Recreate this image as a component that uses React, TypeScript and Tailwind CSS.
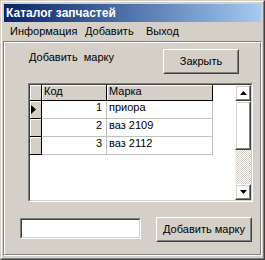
const raised =
  "border border-t-white border-l-white border-r-[#404040] border-b-[#404040]";
const raisedInner =
  "border border-t-[#d4d0c8] border-l-[#d4d0c8] border-r-[#808080] border-b-[#808080]";

function Button({ label, className }: { label: string; className: string }) {
  return (
    <div className={`${raised} ${className}`}>
      <div className={`${raisedInner} flex h-full w-full items-center justify-center`}>
        {label}
      </div>
    </div>
  );
}

function ScrollButton({ dir }: { dir: "up" | "down" }) {
  return (
    <div className={`${raised} h-[16px] w-[16px]`}>
      <div className={`${raisedInner} flex h-full w-full items-center justify-center`}>
        <svg width="7" height="4" viewBox="0 0 7 4">
          {dir === "up" ? (
            <polygon points="3.5,0 7,4 0,4" fill="#000" />
          ) : (
            <polygon points="0,0 7,0 3.5,4" fill="#000" />
          )}
        </svg>
      </div>
    </div>
  );
}

const rows = [
  { code: 1, name: "приора" },
  { code: 2, name: "ваз 2109" },
  { code: 3, name: "ваз 2112" },
];

function Grid() {
  return (
    <div className="ml-[23px] mt-[9px] h-[119px] w-[225px] border border-t-[#808080] border-l-[#808080] border-r-white border-b-white">
      <div className="flex h-full w-full border border-t-[#404040] border-l-[#404040] border-r-[#d4d0c8] border-b-[#d4d0c8] bg-white">
        <div className="flex w-[205px] flex-col">
          {/* header */}
          <div className="flex h-[16px]">
            <div className="h-full w-[12px] border-r border-b border-r-black border-b-black bg-[#d4d0c8] shadow-[inset_1px_1px_0_#fff]" />
            <div className="h-full w-[65px] border-r border-b border-r-black border-b-black bg-[#d4d0c8] pl-[2px] leading-[13px] shadow-[inset_1px_1px_0_#fff]">
              Код
            </div>
            <div className="h-full w-[106px] border-r border-b border-r-black border-b-black bg-[#d4d0c8] pl-[2px] leading-[13px] shadow-[inset_1px_1px_0_#fff]">
              Марка
            </div>
          </div>
          {rows.map((r, i) => (
            <div key={r.code} className="flex h-[18px]">
              <div className="flex h-full w-[12px] items-center border-r border-b border-r-black border-b-black bg-[#d4d0c8] pl-[1px] shadow-[inset_1px_1px_0_#fff]">
                {i === 0 && (
                  <svg width="5" height="9" viewBox="0 0 5 9">
                    <polygon points="0,0 5,4.5 0,9" fill="#000" />
                  </svg>
                )}
              </div>
              <div className="h-full w-[65px] border-r border-b border-[#c0c0c0] pr-[4px] text-right leading-[13px]">
                {r.code}
              </div>
              <div className="h-full w-[106px] border-r border-b border-[#c0c0c0] pl-[2px] leading-[13px]">
                {r.name}
              </div>
            </div>
          ))}
        </div>
        {/* scrollbar */}
        <div className="flex w-[16px] flex-col">
          <ScrollButton dir="up" />
          <div className={`${raised} h-[49px] w-[16px]`}>
            <div className={`${raisedInner} h-full w-full`} />
          </div>
          <div className="flex-1 bg-[repeating-conic-gradient(#d4d0c8_0%_25%,#ffffff_0%_50%)] bg-[length:2px_2px]" />
          <ScrollButton dir="down" />
        </div>
      </div>
    </div>
  );
}

export default function App() {
  return (
    <div className="h-[260px] w-[265px] font-['Liberation_Sans',Arial,sans-serif] text-[11px] text-black">
      <div className="h-full w-full border border-t-[#d4d0c8] border-l-[#d4d0c8] border-r-[#404040] border-b-[#404040]">
        <div className="flex h-full w-full flex-col border border-t-white border-l-white border-r-[#808080] border-b-[#808080] bg-[#d4d0c8] px-[1px] pt-[2px]">
          {/* title bar */}
          <div className="mx-[1px] flex h-[18px] items-center bg-gradient-to-r from-[#0a246a] to-[#a6caf0] pl-[2px] text-[12px] font-bold text-white">
            Каталог запчастей
          </div>
          {/* menu */}
          <div className="mx-[1px] flex h-[19px] items-center">
            <span className="w-[75px] pl-[6px]">Информация</span>
            <span className="w-[61px] pl-[6px]">Добавить</span>
            <span className="pl-[6px]">Выход</span>
          </div>
          {/* panel */}
          <div className="h-[215px] border border-t-[#808080] border-l-[#808080] border-r-white border-b-white">
            <div className="h-full w-full border border-t-white border-l-white border-r-[#808080] border-b-[#808080]">
              <div className="mt-[6px] flex items-start">
                <div className="w-[158px] whitespace-pre pl-[24px] pt-[2px] leading-[13px]">
                  Добавить  марку
                </div>
                <Button label="Закрыть" className="h-[25px] w-[76px]" />
              </div>
              <Grid />
              <div className="mt-[15px] flex items-start">
                <div className="ml-[15px] mt-[1px] h-[21px] w-[121px] border border-t-[#808080] border-l-[#808080] border-r-white border-b-white">
                  <div className="h-full w-full border border-t-[#404040] border-l-[#404040] border-r-[#d4d0c8] border-b-[#d4d0c8] bg-white" />
                </div>
                <Button label="Добавить марку" className="ml-[15px] h-[25px] w-[96px]" />
              </div>
            </div>
          </div>
        </div>
      </div>
    </div>
  );
}
